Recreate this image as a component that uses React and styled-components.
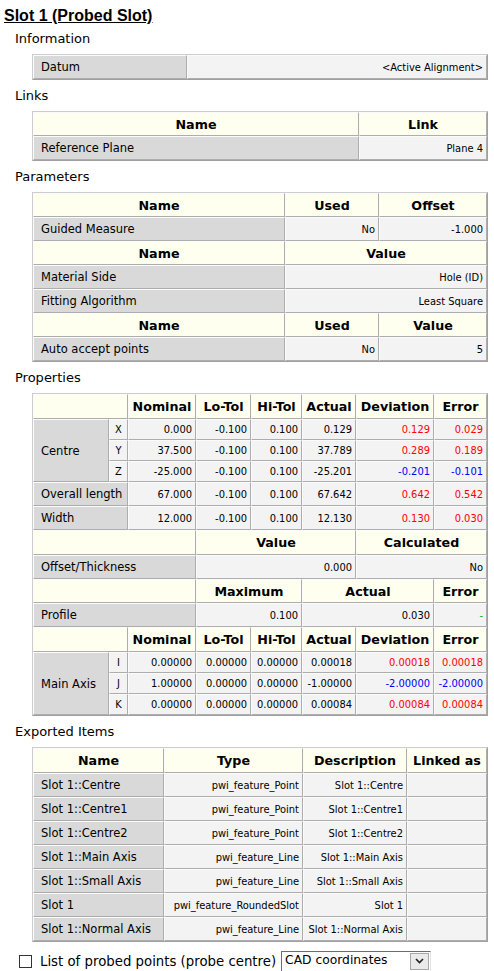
import React from "react"
import styled, { createGlobalStyle } from "styled-components"

const GlobalStyle = createGlobalStyle`
  body {
    margin: 0;
    background: #ffffff;
  }
`

const Page = styled.div`
  width: 494px;
  padding-top: 6px;
  font-family: "DejaVu Sans", Verdana, sans-serif;
  color: #000;
`

const Title = styled.h1`
  margin: 0 0 0 4px;
  font: bold 16px/20px "Liberation Sans", Arial, sans-serif;
  text-decoration: underline;
`

const SectionLabel = styled.div`
  margin: ${(p) => (p.$first ? "5px" : "8px")} 0 7px 15px;
  font-size: 13px;
  line-height: 16px;
`

const Grid = styled.table`
  margin-left: 32px;
  width: 456px;
  table-layout: fixed;
  border-collapse: separate;
  border-spacing: 0;
  border: 1px solid;
  border-color: #cdcdcd #a0a0a0 #a0a0a0 #cdcdcd;
`

const Col = styled.col`
  width: ${(p) => p.$w}px;
`

const tones = {
  red: "#ff0000",
  blue: "#0000ff",
  green: "#00b000",
}

const Cell = styled.td`
  box-sizing: border-box;
  height: ${(p) => p.$h || 24}px;
  padding: 0 3px 0 2px;
  border: 1px solid;
  border-color: #fbfbfb #adadad #adadad #fbfbfb;
  white-space: nowrap;
  overflow: visible;
  background: #f3f3f3;
  font-family: "DejaVu Sans Condensed", Tahoma, sans-serif;
  font-size: 11px;
  text-align: ${(p) => p.$align || "right"};
  color: ${(p) => tones[p.$tone] || "#000"};
`

const Head = styled(Cell).attrs({ as: "th" })`
  height: ${(p) => p.$h || 24}px;
  padding: 0 2px;
  background: #fffff0;
  font-family: "DejaVu Sans", Verdana, sans-serif;
  font-weight: bold;
  font-size: 12.7px;
  text-align: center;
`

const Label = styled(Cell)`
  padding: 0 2px 0 7px;
  background: #d9d9d9;
  font-family: "DejaVu Sans", Verdana, sans-serif;
  font-size: 11.5px;
  text-align: left;
`

const Axis = styled(Cell)`
  padding: 0;
  text-align: center;
`

const Options = styled.div`
  display: flex;
  align-items: center;
  height: 22px;
  margin: 8px 0 0 19px;
`

const Check = styled.span`
  box-sizing: border-box;
  width: 13px;
  height: 13px;
  border: 1px solid #333;
  background: #fff;
`

const OptionText = styled.span`
  margin-left: 8px;
  font-size: 13.3px;
`

const Dropdown = styled.div`
  box-sizing: border-box;
  display: flex;
  justify-content: space-between;
  width: 150px;
  height: 21px;
  margin-left: 5px;
  padding: 1px 1px 0 3px;
  border: 1px solid;
  border-color: #6d6d6d #e3e3e3 #e3e3e3 #6d6d6d;
  font-size: 12.3px;
  line-height: 15px;
`

const DropButton = styled.span`
  box-sizing: border-box;
  display: flex;
  align-items: center;
  justify-content: center;
  width: 19px;
  height: 17px;
  border: 1px solid #a8a8a8;
  background: #eaeaea;
`

const propCols = [76, 19, 68, 55, 51, 54, 78, 53]
const propHeads = ["Nominal", "Lo-Tol", "Hi-Tol", "Actual", "Deviation", "Error"]

const centre = [
  ["X", "0.000", "-0.100", "0.100", "0.129", "0.129", "0.029", "red"],
  ["Y", "37.500", "-0.100", "0.100", "37.789", "0.289", "0.189", "red"],
  ["Z", "-25.000", "-0.100", "0.100", "-25.201", "-0.201", "-0.101", "blue"],
]

const mainAxis = [
  ["I", "0.00000", "0.00000", "0.00000", "0.00018", "0.00018", "0.00018", "red"],
  ["J", "1.00000", "0.00000", "0.00000", "-1.00000", "-2.00000", "-2.00000", "blue"],
  ["K", "0.00000", "0.00000", "0.00000", "0.00084", "0.00084", "0.00084", "red"],
]

const exported = [
  ["Slot 1::Centre", "pwi_feature_Point"],
  ["Slot 1::Centre1", "pwi_feature_Point"],
  ["Slot 1::Centre2", "pwi_feature_Point"],
  ["Slot 1::Main Axis", "pwi_feature_Line"],
  ["Slot 1::Small Axis", "pwi_feature_Line"],
  ["Slot 1", "pwi_feature_RoundedSlot"],
  ["Slot 1::Normal Axis", "pwi_feature_Line"],
]

const PropHeadRow = () => (
  <tr>
    <Head colSpan={2} $h={25} />
    {propHeads.map((h) => (
      <Head key={h} $h={25}>
        {h}
      </Head>
    ))}
  </tr>
)

const AxisRows = ({ name, rows }) =>
  rows.map(([axis, nom, lo, hi, act, dev, err, tone], i) => (
    <tr key={axis}>
      {i === 0 && (
        <Label rowSpan={3} $h={21}>
          {name}
        </Label>
      )}
      <Axis $h={21}>{axis}</Axis>
      <Cell $h={21}>{nom}</Cell>
      <Cell $h={21}>{lo}</Cell>
      <Cell $h={21}>{hi}</Cell>
      <Cell $h={21}>{act}</Cell>
      <Cell $h={21} $tone={tone}>
        {dev}
      </Cell>
      <Cell $h={21} $tone={tone}>
        {err}
      </Cell>
    </tr>
  ))

const Chevron = () => (
  <svg width="9" height="6" viewBox="0 0 9 6">
    <path d="M1 1 L4.5 4.5 L8 1" fill="none" stroke="#222" strokeWidth="1.6" />
  </svg>
)

const App = () => (
  <Page>
    <GlobalStyle />
    <Title>Slot 1 (Probed Slot)</Title>

    <SectionLabel $first>Information</SectionLabel>
    <Grid>
      <colgroup>
        <Col $w={154} />
        <Col $w={300} />
      </colgroup>
      <tbody>
        <tr>
          <Label $h={24}>Datum</Label>
          <Cell>&lt;Active Alignment&gt;</Cell>
        </tr>
      </tbody>
    </Grid>

    <SectionLabel>Links</SectionLabel>
    <Grid>
      <colgroup>
        <Col $w={326} />
        <Col $w={128} />
      </colgroup>
      <tbody>
        <tr>
          <Head>Name</Head>
          <Head>Link</Head>
        </tr>
        <tr>
          <Label>Reference Plane</Label>
          <Cell>Plane 4</Cell>
        </tr>
      </tbody>
    </Grid>

    <SectionLabel>Parameters</SectionLabel>
    <Grid>
      <colgroup>
        <Col $w={252} />
        <Col $w={94} />
        <Col $w={108} />
      </colgroup>
      <tbody>
        <tr>
          <Head>Name</Head>
          <Head>Used</Head>
          <Head>Offset</Head>
        </tr>
        <tr>
          <Label>Guided Measure</Label>
          <Cell>No</Cell>
          <Cell>-1.000</Cell>
        </tr>
        <tr>
          <Head>Name</Head>
          <Head colSpan={2}>Value</Head>
        </tr>
        <tr>
          <Label>Material Side</Label>
          <Cell colSpan={2}>Hole (ID)</Cell>
        </tr>
        <tr>
          <Label>Fitting Algorithm</Label>
          <Cell colSpan={2}>Least Square</Cell>
        </tr>
        <tr>
          <Head>Name</Head>
          <Head>Used</Head>
          <Head>Value</Head>
        </tr>
        <tr>
          <Label>Auto accept points</Label>
          <Cell>No</Cell>
          <Cell>5</Cell>
        </tr>
      </tbody>
    </Grid>

    <SectionLabel>Properties</SectionLabel>
    <Grid>
      <colgroup>
        {propCols.map((w, i) => (
          <Col key={i} $w={w} />
        ))}
      </colgroup>
      <tbody>
        <PropHeadRow />
        <AxisRows name="Centre" rows={centre} />
        <tr>
          <Label colSpan={2}>Overall length</Label>
          <Cell>67.000</Cell>
          <Cell>-0.100</Cell>
          <Cell>0.100</Cell>
          <Cell>67.642</Cell>
          <Cell $tone="red">0.642</Cell>
          <Cell $tone="red">0.542</Cell>
        </tr>
        <tr>
          <Label colSpan={2}>Width</Label>
          <Cell>12.000</Cell>
          <Cell>-0.100</Cell>
          <Cell>0.100</Cell>
          <Cell>12.130</Cell>
          <Cell $tone="red">0.130</Cell>
          <Cell $tone="red">0.030</Cell>
        </tr>
        <tr>
          <Head colSpan={3} $h={25} />
          <Head colSpan={3} $h={25}>
            Value
          </Head>
          <Head colSpan={2} $h={25}>
            Calculated
          </Head>
        </tr>
        <tr>
          <Label colSpan={3}>Offset/Thickness</Label>
          <Cell colSpan={3}>0.000</Cell>
          <Cell colSpan={2}>No</Cell>
        </tr>
        <tr>
          <Head colSpan={3} />
          <Head colSpan={2}>Maximum</Head>
          <Head colSpan={2}>Actual</Head>
          <Head>Error</Head>
        </tr>
        <tr>
          <Label colSpan={3}>Profile</Label>
          <Cell colSpan={2}>0.100</Cell>
          <Cell colSpan={2}>0.030</Cell>
          <Cell $tone="green">-</Cell>
        </tr>
        <PropHeadRow />
        <AxisRows name="Main Axis" rows={mainAxis} />
      </tbody>
    </Grid>

    <SectionLabel>Exported Items</SectionLabel>
    <Grid>
      <colgroup>
        <Col $w={131} />
        <Col $w={139} />
        <Col $w={104} />
        <Col $w={80} />
      </colgroup>
      <tbody>
        <tr>
          <Head $h={25}>Name</Head>
          <Head $h={25}>Type</Head>
          <Head $h={25}>Description</Head>
          <Head $h={25}>Linked as</Head>
        </tr>
        {exported.map(([name, type]) => (
          <tr key={name}>
            <Label>{name}</Label>
            <Cell>{type}</Cell>
            <Cell>{name}</Cell>
            <Cell />
          </tr>
        ))}
      </tbody>
    </Grid>

    <Options>
      <Check />
      <OptionText>List of probed points (probe centre)</OptionText>
      <Dropdown>
        <span>CAD coordinates</span>
        <DropButton>
          <Chevron />
        </DropButton>
      </Dropdown>
    </Options>
  </Page>
)

export default App
